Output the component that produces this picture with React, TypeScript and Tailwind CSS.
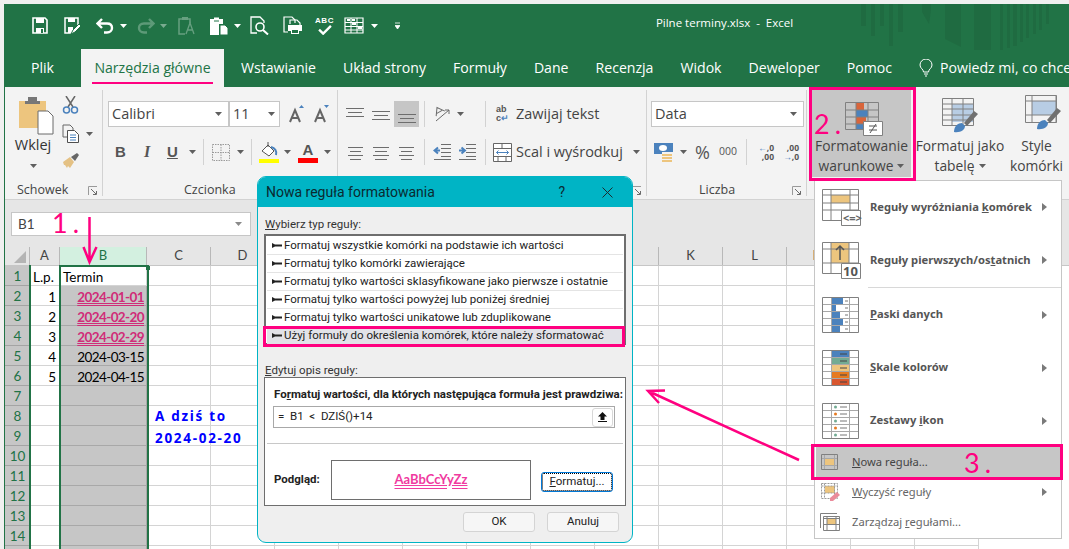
import type { ReactNode } from "react"

const PINK = "#ff0080"
const GREEN = "#217346"

function Caret({ color = "#5f5f5f" }: { color?: string }) {
  return (
    <svg width="7" height="4" viewBox="0 0 7 4" className="shrink-0">
      <path d="M0 0h7L3.500 4z" fill={color} />
    </svg>
  )
}

function Launcher() {
  return (
    <svg width="10" height="10" viewBox="0 0 10 10" className="shrink-0">
      <path d="M.5 9V.5H9" fill="none" stroke="#9a9a9a" />
      <path d="M3 3l5 5M5 8.500h3.500V5" fill="none" stroke="#6a6a6a" />
    </svg>
  )
}

function Sep({ h = 26 }: { h?: number }) {
  return <div className="w-px bg-[#d2d2d2] shrink-0" style={{ height: h }} />
}

function Lines({ w = 18, rows, sizes }: { w?: number; rows: number[]; sizes?: number[] }) {
  return (
    <svg width={w} height="20" viewBox={`0 0 ${w} 20`} className="shrink-0">
      {rows.map((y, i) => {
        const s = sizes ? sizes[i] : 0
        return <path key={y} d={`M${s} ${y}.5H${w - s}`} stroke="#6d6d6d" />
      })}
    </svg>
  )
}

function QuickBar() {
  return (
    <div className="flex items-center pl-[27px] h-[45px] shrink-0 pb-[2px]">
      <svg width="16" height="17" viewBox="0 0 16 17">
        <path d="M1 1h12l2 2v13H1z" fill="none" stroke="#fff" strokeWidth="1.600" />
        <path d="M4 1h8v5H4z" fill="#fff" />
        <path d="M4 16v-5h8v5z" fill="#fff" />
        <path d="M9 12h2v4H9z" fill={GREEN} />
      </svg>
      <svg width="17" height="18" viewBox="0 0 17 18" className="ml-[16px]">
        <path d="M7 16H1V1h13v7" fill="none" stroke="#fff" strokeWidth="1.500" />
        <path d="M4 1h7v4H4zM4 10h5v6H4z" fill="#fff" />
        <path d="M7 17l2-4 6-6 2 2-6 6z" fill="#fff" stroke={GREEN} />
      </svg>
      <svg width="18" height="16" viewBox="0 0 18 16" className="ml-[15px]">
        <path d="M6 1L1.500 5.500 6 10M2 5.500h9c3.500 0 5 2 5 4.500s-2 4.500-5 4.500H8" fill="none" stroke="#fff" strokeWidth="2.400" />
      </svg>
      <div className="ml-[6px]"><Caret color="#ffffff" /></div>
      <svg width="18" height="16" viewBox="0 0 18 16" className="ml-[10px] opacity-40">
        <path d="M12 1l4.500 4.500L12 10M16 5.500H7c-3.500 0-5 2-5 4.500s2 4.500 5 4.500h3" fill="none" stroke="#b8d5c4" strokeWidth="2.400" />
      </svg>
      <div className="ml-[5px] opacity-40"><Caret color="#ffffff" /></div>
      <svg width="18" height="19" viewBox="0 0 18 19" className="ml-[11px] opacity-40">
        <path d="M5 3H1v15h6M12 7V3H8" fill="none" stroke="#cfe3d7" strokeWidth="1.500" />
        <path d="M4 1h6v3H4z" fill="#cfe3d7" />
        <path d="M8 18l4-11 4 11M10 14h4" fill="none" stroke="#cfe3d7" strokeWidth="1.300" />
      </svg>
      <svg width="20" height="20" viewBox="0 0 20 20" className="ml-[13px]">
        <path d="M1 3h4V1.500h5V3h4v5H10v11H1z" fill="#fff" />
        <path d="M11 9h5l3 3v7h-8z" fill="#fff" stroke={GREEN} />
        <path d="M5 5h5" stroke={GREEN} />
      </svg>
      <div className="ml-[5px]"><Caret color="#ffffff" /></div>
      <svg width="19" height="19" viewBox="0 0 19 19" className="ml-[9px]">
        <path d="M7 17H1V1h9l4 4v2" fill="none" stroke="#fff" strokeWidth="1.300" />
        <circle cx="10" cy="11" r="4" fill="none" stroke="#fff" strokeWidth="1.600" />
        <path d="M13 14l5 4.500" stroke="#fff" strokeWidth="2" />
      </svg>
      <svg width="20" height="19" viewBox="0 0 20 19" className="ml-[14px]">
        <path d="M5 16H1V1h8l3 3v3" fill="none" stroke="#fff" strokeWidth="1.200" />
        <path d="M7 8V4h7l3 3v2" fill="none" stroke="#fff" strokeWidth="1.200" />
        <path d="M5 9h14v6h-3v3H8v-3H5z" fill="#fff" />
        <path d="M9 14h6v3H9z" fill={GREEN} />
      </svg>
      <div className="ml-[13px] flex flex-col items-center w-[17px] h-[19px]">
        <span className="text-[8px] leading-[9px] font-bold text-white tracking-[0.500px] font-['Liberation_Sans',sans-serif]">ABC</span>
        <svg width="16" height="11" viewBox="0 0 16 11">
          <path d="M1.500 5l4.500 4.500L14.500 1" fill="none" stroke="#fff" strokeWidth="2.600" />
        </svg>
      </div>
      <svg width="20" height="17" viewBox="0 0 20 17" className="ml-[11px]">
        <path d="M1 1h18v15H1z" fill="none" stroke="#fff" strokeWidth="1.200" />
        <path d="M1 5.500h18M1 9.500h18M1 13h18M7 1v15M13 1v15" stroke="#fff" />
        <path d="M3 3h3M8 7h4M14 11h4M8 3h3" stroke="#fff" strokeWidth="2" />
      </svg>
      <div className="ml-[7px]"><Caret color="#ffffff" /></div>
      <svg width="5" height="8" viewBox="0 0 5 8" className="ml-[17px]">
        <path d="M0 1h5M0 3.500h5L2.500 7z" stroke="#fff" fill="#fff" strokeWidth=".8" />
      </svg>
    </div>
  )
}

function Tabs() {
  const tabs = ["Wstawianie", "Układ strony", "Formuły", "Dane", "Recenzja", "Widok", "Deweloper", "Pomoc"]
  return (
    <div className="flex h-[38px] pl-[26px] text-[14.100px] text-white items-stretch shrink-0 whitespace-nowrap font-['Open_Sans',sans-serif]">
      <div className="flex items-center w-[50px] shrink-0">Plik</div>
      <div className="relative flex items-center w-[143px] justify-center bg-[#f3f3f3] text-[#217346] shrink-0">
        Narzędzia główne
        <div className="absolute left-[11px] w-[121px] top-[33px] h-[2px] bg-[#ff0080]" />
      </div>
      {tabs.map((t, i) => (
        <div key={t} className={`flex items-center shrink-0 ${i === 0 ? "ml-[17px]" : "ml-[27px]"}`}>{t}</div>
      ))}
      <div className="flex items-center ml-[27px] gap-[7px] shrink-0">
        <svg width="14" height="18" viewBox="0 0 14 18">
          <path d="M4.500 13C4.500 10 1 9.500 1 6a6 6 0 0 1 12 0c0 3.500-3.500 4-3.500 7zM5 15h4M6 17h2" fill="none" stroke="#fff" />
        </svg>
        Powiedz mi, co chcesz zrobić
      </div>
    </div>
  )
}

function Group({ w, label, children, labelClass = "justify-center" }: { w: number; label: string; children: ReactNode; labelClass?: string }) {
  return (
    <div className="relative h-full border-r border-[#d2d2d2] shrink-0" style={{ width: w }}>
      {children}
      <div className={`absolute bottom-[-3px] left-0 right-0 flex h-[18px] items-center ${labelClass} text-[12.500px] text-[#444]`}>{label}</div>
      <div className="absolute right-[4px] bottom-0"><Launcher /></div>
    </div>
  )
}

function Clipboard() {
  return (
    <Group w={98} label="Schowek" labelClass="justify-start pl-[12px]">
      <div className="flex pl-[9px] pt-[5px]">
        <div className="w-[44px] flex flex-col items-center">
          <svg width="36" height="40" viewBox="0 0 36 40">
            <path d="M1 6h27v27H1z" fill="#edc57e" />
            <path d="M10 6V2h9v4h3v3H7V6z" fill="#777" />
            <path d="M20 16h10l5 5v18H20z" fill="#fff" stroke="#6a6a6a" />
          </svg>
          <span className="text-[14.500px] mt-[1px] ml-[-6px] leading-[18px] text-[#333]">Wklej</span>
          <div className="mt-[10px] ml-[-6px]"><Caret /></div>
        </div>
        <div className="ml-[4px] flex flex-col pt-[1px]">
          <svg width="18" height="18" viewBox="0 0 18 18">
            <path d="M4 0l7 11M13 0L6 11" stroke="#666" strokeWidth="1.500" />
            <circle cx="4.500" cy="14" r="3" fill="none" stroke="#4b82bd" strokeWidth="1.500" />
            <circle cx="12.500" cy="14" r="3" fill="none" stroke="#4b82bd" strokeWidth="1.500" />
          </svg>
          <div className="flex items-center mt-[10px]">
            <svg width="18" height="19" viewBox="0 0 18 19">
              <path d="M5 13H1V1h7l3 3v2" fill="none" stroke="#666" />
              <path d="M5.500 6.500h7l4 4v8h-11z" fill="#fff" stroke="#4f4f4f" />
              <path d="M8 11h6M8 13.500h6M8 16h6" stroke="#4b82bd" />
            </svg>
            <div className="ml-[6px]"><Caret /></div>
          </div>
          <svg width="18" height="16" viewBox="0 0 18 16" className="mt-[10px]">
            <path d="M1 9l7-5 4 5-4 6-2-2-1 2-2-3-1 0z" fill="#e4c184" />
            <path d="M9 4l6-4 2 2-4 6z" fill="#666" />
          </svg>
        </div>
      </div>
    </Group>
  )
}

function Font() {
  return (
    <Group w={235} label="Czcionka" labelClass="justify-start pl-[81px]">
      <div className="flex items-center pl-[5px] pt-[11px] h-[37px]">
        <div className="w-[121px] h-[26px] bg-white border border-[#c6c6c6] flex items-center justify-between pl-[3px] pr-[6px] text-[14.500px] text-[#444]">
          Calibri <Caret />
        </div>
        <div className="w-[51px] h-[26px] bg-white border border-[#c6c6c6] flex items-center justify-between pl-[3px] pr-[4px] text-[14.500px] text-[#444]">
          11 <Caret />
        </div>
        <svg width="16" height="18" viewBox="0 0 16 18" className="ml-[9px]">
          <path d="M1 17L6 5l5 12M3 13h6" fill="none" stroke="#666" strokeWidth="2" />
          <path d="M10 3h5L12.500 0z" fill="#4b82bd" />
        </svg>
        <svg width="16" height="18" viewBox="0 0 16 18" className="ml-[9px]">
          <path d="M1 17L6 5l5 12M3 13h6" fill="none" stroke="#666" strokeWidth="2" />
          <path d="M10 0h5l-2.500 3z" fill="#4b82bd" />
        </svg>
      </div>
      <div className="flex items-center pl-[12px] mt-[11px] h-[28px] text-[#555]">
        <span className="font-['Liberation_Sans',sans-serif] font-bold text-[15px] w-[29px]">B</span>
        <span className="font-['Liberation_Serif',serif] font-bold italic text-[16px] w-[23px]">I</span>
        <span className="font-['Liberation_Sans',sans-serif] font-bold text-[15px] underline w-[22px]">U</span>
        <Caret />
        <div className="ml-[7px]"><Sep /></div>
        <svg width="18" height="17" viewBox="0 0 18 17" className="ml-[8px]">
          <path d="M.5.500h17v16H.500zM9 .5v16M.5 8.500h17" fill="none" stroke="#9a9a9a" strokeDasharray="1.500 1" />
        </svg>
        <div className="ml-[7px]"><Caret /></div>
        <div className="ml-[7px]"><Sep /></div>
        <svg width="21" height="21" viewBox="0 0 21 21" className="ml-[6px]">
          <path d="M4 9l6-6 6 6-5 5z" fill="#fff" stroke="#555" />
          <path d="M10 0v5" stroke="#555" />
          <path d="M13 5c4 1 6 4 5 8" fill="none" stroke="#4b82bd" strokeWidth="2" />
          <path d="M1 17h20v4H1z" fill="#ffff00" />
        </svg>
        <div className="ml-[5px]"><Caret /></div>
        <div className="relative ml-[7px] w-[20px] h-[21px] flex justify-center">
          <span className="font-['Liberation_Sans',sans-serif] font-bold text-[15px] leading-[16px] text-[#555]">A</span>
          <div className="absolute left-0 bottom-0 w-[20px] h-[5px] bg-[#ff0000]" />
        </div>
        <div className="ml-[6px]"><Caret /></div>
      </div>
    </Group>
  )
}

function Alignment() {
  return (
    <Group w={309} label="">
      <div className="flex items-center pl-[4px] pt-[11px] h-[37px]">
        <div className="w-[26px] flex justify-center"><Lines w={18} rows={[4, 8, 12]} sizes={[0, 2, 0]} /></div>
        <div className="w-[26px] flex justify-center"><Lines w={18} rows={[7, 11, 15]} sizes={[0, 2, 0]} /></div>
        <div className="w-[25px] h-[26px] bg-[#c6c6c6] flex items-center justify-center"><Lines w={18} rows={[10, 14, 18]} sizes={[0, 2, 0]} /></div>
        <div className="ml-[5px]"><Sep /></div>
        <svg width="18" height="18" viewBox="0 0 18 18" className="ml-[8px]">
          <path d="M1 9l5-7 5 7M3 7h6" fill="none" stroke="#6a6a6a" transform="rotate(-30 6 6)" />
          <path d="M3 16L16 5M12 5h4v4" fill="none" stroke="#6a6a6a" />
        </svg>
        <div className="ml-[6px]"><Caret /></div>
        <div className="ml-[21px]"><Sep /></div>
        <div className="ml-[10px] w-[17px] h-[18px] font-['Liberation_Sans',sans-serif] text-[9px] leading-[9px] font-bold text-[#555] shrink-0">
          <span>ab</span>
          <br />
          <span>c</span>
          <span className="text-[#4b82bd]">↵</span>
        </div>
        <span className="ml-[3px] text-[14.500px] text-[#444] whitespace-nowrap">Zawijaj tekst</span>
      </div>
      <div className="flex items-center pl-[10px] mt-[11px] h-[28px]">
        <Lines w={15} rows={[5, 9, 13, 17]} sizes={[0, 2, 0, 2]} />
        <div className="ml-[10px]"><Lines w={16} rows={[5, 9, 13, 17]} sizes={[0, 2, 0, 2]} /></div>
        <div className="ml-[10px]"><Lines w={15} rows={[5, 9, 13, 17]} sizes={[0, 2, 0, 2]} /></div>
        <div className="ml-[10px]"><Sep /></div>
        <svg width="18" height="18" viewBox="0 0 18 18" className="ml-[8px]">
          <path d="M8 1.500h10M8 5.500h10M8 9.500h10M8 13.500h10M1 16.500h17" stroke="#6d6d6d" />
          <path d="M7 7.500H2M5 4.500L1.500 7.500 5 10.500" fill="none" stroke="#4b82bd" strokeWidth="2" />
        </svg>
        <svg width="18" height="18" viewBox="0 0 18 18" className="ml-[7px]">
          <path d="M8 1.500h10M8 5.500h10M8 9.500h10M8 13.500h10M1 16.500h17" stroke="#6d6d6d" />
          <path d="M1 7.500h5M3.500 4.500L7 7.500 3.500 10.500" fill="none" stroke="#4b82bd" strokeWidth="2" />
        </svg>
        <div className="ml-[9px]"><Sep /></div>
        <svg width="19" height="19" viewBox="0 0 19 19" className="ml-[7px]">
          <path d="M.5.500h18v18H.500z" fill="#fff" stroke="#666" />
          <path d="M.5 5.500h18M.5 13.500h18M9 .5v5M5 13.500v5M13 13.500v5" stroke="#666" />
          <path d="M3.500 9.500h12M5.500 7.500l-2 2 2 2M13.500 7.500l2 2-2 2" fill="none" stroke="#4b82bd" />
        </svg>
        <span className="ml-[4px] text-[14.500px] text-[#444] whitespace-nowrap">Scal i wyśrodkuj</span>
        <div className="ml-[10px]"><Caret /></div>
      </div>
    </Group>
  )
}

function NumberGroup() {
  return (
    <Group w={160} label="Liczba" labelClass="justify-start pl-[52px]">
      <div className="flex items-center pl-[4px] pt-[11px] h-[37px]">
        <div className="w-[153px] h-[26px] bg-white border border-[#c6c6c6] flex items-center justify-between pl-[3px] pr-[6px] text-[14.500px] text-[#444]">
          Data <Caret />
        </div>
      </div>
      <div className="flex items-center pl-[7px] mt-[11px] h-[28px] text-[#555]">
        <svg width="20" height="19" viewBox="0 0 20 19" className="shrink-0">
          <path d="M0 0h19v9H8v2H0z" fill="#4b82bd" />
          <ellipse cx="9" cy="5" rx="4" ry="3" fill="#fff" />
          <path d="M8 11h10v2H8zM8 14h10v2H8zM8 17h10v2H8z" fill="#edc57e" />
        </svg>
        <div className="ml-[6px]"><Caret /></div>
        <span className="ml-[8px] text-[18px] w-[16px] leading-[18px]">%</span>
        <span className="ml-[8px] text-[10.500px] w-[18px]">000</span>
        <div className="ml-[9px]"><Sep /></div>
        <div className="ml-[9px] w-[18px] text-[8.500px] leading-[9px] font-bold text-right">
          <span className="text-[#4b82bd]">←</span>,0
          <br />,00
        </div>
        <div className="ml-[7px] w-[18px] text-[8.500px] leading-[9px] font-bold text-right">
          ,00
          <br />
          <span className="text-[#4b82bd]">→</span>,0
        </div>
      </div>
    </Group>
  )
}

function MiniGrid({ w, h, cols, rows, children }: { w: number; h: number; cols: number[]; rows: number[]; children?: ReactNode }) {
  return (
    <svg width={w + 1} height={h + 1} viewBox={`0 0 ${w + 1} ${h + 1}`} className="shrink-0">
      {children}
      {cols.map(c => <path key={`c${c}`} d={`M${c}.5 0V${h}`} stroke="#a8a8a8" />)}
      {rows.map(r => <path key={`r${r}`} d={`M0 ${r}.5H${w}`} stroke="#a8a8a8" />)}
      <path d={`M.5.500H${w}.5V${h}.5H.500z`} fill="none" stroke="#808080" />
    </svg>
  )
}

function Styles() {
  return (
    <div className="flex h-full flex-1 text-[13.800px] leading-[20px] text-[#444] whitespace-nowrap">
      <div className="w-[99px] ml-[5px] h-[87px] bg-[#c6c6c6] flex flex-col items-center shrink-0">
        <svg width="38" height="34" viewBox="0 0 38 34" className="mt-[12px] ml-[5px] shrink-0">
          <path d="M11 1h8v7h-8z" fill="#d9653b" />
          <path d="M11 8h12v7H11z" fill="#4b82bd" />
          <path d="M11 15h10v7H11z" fill="#d9653b" />
          <path d="M11 22h8v6H11z" fill="#4b82bd" />
          <path d="M.5.500h33v27H.500zM11 .5v27M23 .5v27M.5 8h33M.5 15h33M.5 22h33" fill="none" stroke="#808080" />
          <path d="M18.500 19.500h19v14h-19z" fill="#fff" stroke="#808080" />
          <path d="M24 24h8M24 28h8M31 22l-6 9" stroke="#555" />
        </svg>
        <span>Formatowanie</span>
        <span className="flex items-center gap-[4px]">warunkowe <Caret /></span>
      </div>
      <div className="w-[90px] ml-[4px] flex flex-col items-center shrink-0">
        <svg width="36" height="36" viewBox="0 0 36 36" className="mt-[8px] mb-[2px] shrink-0">
          <path d="M10 6h22v18H10z" fill="#b8cde4" />
          <path d="M.5.500h31v27H.500zM.5 6h31M.5 11h31M.5 17h31M.5 22h31M10 .5v27M21 .5v27" fill="none" stroke="#808080" />
          <path d="M12 34c0-6 4-9 8-9l3 3c0 4-5 7-11 6z" fill="#4b82bd" />
          <path d="M22 25l10-12 4 3-11 12z" fill="#707070" />
        </svg>
        <span>Formatuj jako</span>
        <span className="flex items-center gap-[4px]">tabelę <Caret /></span>
      </div>
      <div className="w-[53px] ml-[5px] flex flex-col items-center shrink-0">
        <svg width="40" height="36" viewBox="0 0 40 36" className="mt-[5px] mb-[5px] ml-[16px] shrink-0">
          <path d="M7 6h24v14H7z" fill="#b8cde4" />
          <path d="M.5.500h31v27H.500zM.5 6h31M.5 20h31M7 .5v27M31 .5v27" fill="none" stroke="#808080" />
          <path d="M12 34c0-6 4-9 8-9l3 3c0 4-5 7-11 6z" fill="#4b82bd" />
          <path d="M22 25l10-12 4 3-11 12z" fill="#707070" />
        </svg>
        <span>Style</span>
        <span>komórki</span>
      </div>
    </div>
  )
}

function Ribbon() {
  return (
    <div className="flex h-[113px] bg-[#f3f3f3] border-b border-[#d2d2d2] shrink-0 pb-[3px] pt-[3px] font-['Open_Sans',sans-serif]">
      <Clipboard />
      <Font />
      <Alignment />
      <NumberGroup />
      <Styles />
    </div>
  )
}

const COLS = ["A", "B", "C", "D", "E", "F", "G", "H", "I", "J", "K", "L", "M", "N", "O"]
const COL_W = [30, 87, 64, 64, 64, 64, 64, 64, 64, 64, 64, 64, 64, 64, 64]
const ROWS = [1, 2, 3, 4, 5, 6, 7, 8, 9, 10, 11, 12, 13, 14, 15]
const DATES: Record<number, { lp: string; d: string; hit?: boolean }> = {
  2: { lp: "1", d: "2024-01-01", hit: true },
  3: { lp: "2", d: "2024-02-20", hit: true },
  4: { lp: "3", d: "2024-02-29", hit: true },
  5: { lp: "4", d: "2024-03-15" },
  6: { lp: "5", d: "2024-04-15" },
}

function Sheet() {
  return (
    <div className="flex-1 bg-white overflow-hidden font-['Lato',sans-serif] text-[13.500px] text-black relative">
      <div className="flex h-[19px] bg-[#e6e6e6] border-b border-[#c6c6c6]">
        <div className="w-[25px] shrink-0 border-r border-[#b8b8b8] relative">
          <div className="absolute right-[3px] bottom-[2px] w-0 h-0 border-l-[12px] border-l-transparent border-b-[12px] border-b-[#b4b4b4]" />
        </div>
        {COLS.map((c, i) => (
          <div
            key={c}
            className={`shrink-0 flex items-center justify-center border-r border-[#b8b8b8] text-[13px] ${c === "B" ? "bg-[#d3f0e0] text-[#217346]" : "text-[#444]"}`}
            style={{ width: COL_W[i] }}
          >
            {c}
          </div>
        ))}
      </div>
      {ROWS.map(r => {
        const row = DATES[r]
        return (
          <div key={r} className="flex h-[20px]">
            <div className="w-[25px] shrink-0 bg-[#c6c6c6] border-b border-[#a4a4a4] flex items-center justify-center pt-[2px] text-[13.500px] text-[#217346]">{r < 15 ? r : ""}</div>
            {COLS.map((c, i) => {
              const colB = c === "B" && r > 1
              let content: ReactNode = null
              if (c === "A" && r === 1) content = <span className="pl-[3px]">L.p.</span>
              if (c === "B" && r === 1) content = <span className="pl-[3px]">Termin</span>
              if (c === "A" && row) content = <span className="block text-right pr-[3px]">{row.lp}</span>
              if (c === "B" && row) {
                content = (
                  <span className={`block text-right pr-[2px] tracking-[-0.600px] ${row.hit ? "font-bold text-[#d02c78] underline decoration-double" : ""}`}>{row.d}</span>
                )
              }
              return (
                <div
                  key={c}
                  className={`shrink-0 leading-[23px] whitespace-nowrap border-r border-b ${colB ? "bg-[#c6c6c6] border-[#a8a8a8]" : "border-[#d4d4d4]"}`}
                  style={{ width: COL_W[i] }}
                >
                  {content}
                </div>
              )
            })}
          </div>
        )
      })}
      <div className="absolute left-[24px] top-[18px] bottom-0 w-[2px] bg-[#217346]" />
      <div className="absolute left-[54px] top-[18px] bottom-0 w-[90px] border-x-2 border-t-2 border-[#217346]" />
      <div className="absolute left-[141px] top-[19px] w-[4px] h-[4px] bg-[#217346]" />
      <div className="absolute left-[150px] top-[159px] text-[#0000ff] font-['Open_Sans',sans-serif] font-bold text-[13.500px] leading-[20px] tracking-[1.700px] whitespace-nowrap">
        <div className="h-[20px]">A dziś to</div>
        <div className="h-[20px] mt-[2px]">2024-02-20</div>
      </div>
    </div>
  )
}

function FormulaBar() {
  return (
    <div className="h-[47px] bg-[#e6e6e6] shrink-0 pt-[12px] pl-[6px] font-['Lato',sans-serif]">
      <div className="w-[240px] h-[24px] bg-white border border-[#c6c6c6] flex items-center justify-between pl-[6px] pr-[8px] text-[13.500px] text-[#444]">
        B1 <Caret color="#8a8a8a" />
      </div>
    </div>
  )
}

function DialogRow({ text, active }: { text: string; active?: boolean }) {
  return (
    <div className={`flex items-center h-[18px] pl-[5px] gap-[2px] border-b border-[#e4e4e4] whitespace-nowrap ${active ? "bg-[#e2e2e8]" : ""}`}>
      <svg width="10" height="5" viewBox="0 0 10 5" className="shrink-0">
        <path d="M0 0l3 1.500h7v2H3L0 5z" fill="#222" />
      </svg>
      {text}
    </div>
  )
}

function Dialog() {
  return (
    <div className="absolute left-[257px] top-[176px] w-[376px] h-[367px] bg-[#efefef] border border-[#00b4c5] rounded-[9px] overflow-hidden font-['Roboto',sans-serif] text-[11.500px] text-[#222] flex flex-col">
      <div className="h-[30px] bg-[#00b4c5] flex items-center justify-between pl-[8px] pr-[19px] text-[14px] text-[#0b2a30] shrink-0">
        <span>Nowa reguła formatowania</span>
        <div className="flex items-center gap-[37px]">
          <span>?</span>
          <svg width="11" height="11" viewBox="0 0 11 11">
            <path d="M.5.500l10 10M10.500.5l-10 10" stroke="#1d2b2e" />
          </svg>
        </div>
      </div>
      <div className="pl-[7px] pt-[9px] leading-[16px] text-[#333]">
        <span className="underline">W</span>ybierz typ reguły:
      </div>
      <div className="mx-[6px] mt-[2px] w-[362px] h-[111px] bg-white border-2 border-[#6e6e6e] pt-[1px] px-[1px] shrink-0">
        <DialogRow text="Formatuj wszystkie komórki na podstawie ich wartości" />
        <DialogRow text="Formatuj tylko komórki zawierające" />
        <DialogRow text="Formatuj tylko wartości sklasyfikowane jako pierwsze i ostatnie" />
        <DialogRow text="Formatuj tylko wartości powyżej lub poniżej średniej" />
        <DialogRow text="Formatuj tylko wartości unikatowe lub zduplikowane" />
        <DialogRow text="Użyj formuły do określenia komórek, które należy sformatować" active />
      </div>
      <div className="pl-[7px] mt-[17px] leading-[16px] text-[#333]">
        <span className="underline">E</span>dytuj opis reguły:
      </div>
      <div className="mx-[6px] mt-[-1px] w-[362px] h-[129px] bg-white border border-[#6e6e6e] shrink-0 flex flex-col">
        <div className="pl-[9px] pt-[8px] font-bold leading-[16px] whitespace-nowrap">
          Fo<span className="underline">r</span>matuj wartości, dla których następująca formuła jest prawdziwa:
        </div>
        <div className="ml-[8px] mt-[4px] w-[342px] h-[22px] border border-[#a8a8a8] bg-white flex items-center justify-between pl-[4px] pr-[1px] shrink-0">
          <span className="whitespace-pre">=  B1  &lt;  DZIŚ()+14</span>
          <div className="w-[21px] h-[19px] bg-white border border-[#d8d8d8] rounded-[3px] flex items-center justify-center">
            <svg width="9" height="10" viewBox="0 0 9 10">
              <path d="M4.500 0L9 4.500H6.500V8h-4V4.500H0zM0 9h9v1H0z" fill="#111" />
            </svg>
          </div>
        </div>
        <div className="h-px bg-[#c8c8c8] mx-[2px] mt-[15px] shrink-0" />
        <div className="flex items-center pl-[9px] mt-[16px]">
          <span className="font-bold w-[57px]">Podgląd:</span>
          <div className="w-[200px] h-[40px] border border-[#6e6e6e] flex items-center justify-center text-[13px] font-bold text-[#f03aa0] underline decoration-double font-['Lato',sans-serif]">AaBbCcYyZz</div>
          <div className="ml-[10px] w-[72px] h-[20px] rounded-[3px] border border-[#0078d7] flex items-center justify-center mt-[3px] outline-1 outline-dotted outline-offset-[-2px] outline-black">
            <span><span className="underline">F</span>ormatuj...</span>
          </div>
        </div>
      </div>
      <div className="flex justify-end gap-[12px] pr-[13px] mt-[6px]">
        <div className="w-[72px] h-[20px] border border-[#d4d4d4] rounded-[3px] bg-[#f6f6f6] flex items-center justify-center">OK</div>
        <div className="w-[72px] h-[20px] border border-[#d4d4d4] rounded-[3px] bg-[#f6f6f6] flex items-center justify-center">Anuluj</div>
      </div>
    </div>
  )
}

function SubArrow() {
  return (
    <svg width="5" height="8" viewBox="0 0 5 8" className="shrink-0">
      <path d="M0 0l5 4-5 4z" fill="#7a7a7a" />
    </svg>
  )
}

function BigItem({ icon, label, h = 53 }: { icon: ReactNode; label: ReactNode; h?: number }) {
  return (
    <div className="flex items-center pl-[7px] pr-[14px] text-[11.200px] font-bold text-[#555]" style={{ height: h }}>
      <div className="w-[48px] h-[40px] flex items-center shrink-0">{icon}</div>
      <span className="flex-1 whitespace-nowrap">{label}</span>
      <SubArrow />
    </div>
  )
}

function Menu() {
  return (
    <div className="absolute left-[814px] top-[180px] w-[248px] h-[359px] bg-white border border-[#c6c6c6] font-['Noto_Sans',sans-serif]">
      <BigItem
        h={52}
        label={<>Reguły wyróżniania <span className="underline">k</span>omórek</>}
        icon={
          <svg width="40" height="37" viewBox="0 0 40 37">
            <path d="M9 6h19v8H9z" fill="#edc57e" />
            <path d="M.5.500h36v31H.500zM.5 6h36M.5 14h36M.5 21h36M9 .5v31M28 .5v31" fill="none" stroke="#808080" />
            <path d="M19.500 21.500h19v15h-19z" fill="#fff" stroke="#808080" />
            <text x="21" y="33" fontSize="11" fill="#666" fontFamily="Noto Sans">&lt;=&gt;</text>
          </svg>
        }
      />
      <BigItem
        h={54}
        label={<>Reguły pierwszych/os<span className="underline">t</span>atnich</>}
        icon={
          <svg width="40" height="37" viewBox="0 0 40 37">
            <path d="M9 1h18v20H9z" fill="#edc57e" />
            <path d="M.5.500h36v31H.500zM.5 7h36M.5 21h36M9 .5v31M27 .5v31" fill="none" stroke="#808080" />
            <path d="M18 18V4M14 8l4-4 4 4" fill="none" stroke="#555" strokeWidth="1.500" />
            <path d="M19.500 21.500h19v15h-19z" fill="#fff" stroke="#808080" />
            <text x="21" y="34" fontSize="13" fill="#555" fontFamily="Noto Sans">10</text>
          </svg>
        }
      />
      <div className="h-px bg-[#d8d8d8] ml-[53px]" />
      <BigItem
        label={<><span className="underline">P</span>aski danych</>}
        icon={
          <MiniGrid w={36} h={35} cols={[9, 27]} rows={[7, 14, 21, 28]}>
            <path d="M9 1h12v6H9zM9 8h5v6H9zM9 15h9v6H9zM9 22h12v6H9zM9 29h9v6H9z" fill="#4b82bd" />
            <path d="M23 4h3M23 11h3M23 18h3M23 25h3M23 32h3" stroke="#777" />
          </MiniGrid>
        }
      />
      <BigItem
        label={<><span className="underline">S</span>kale kolorów</>}
        icon={
          <MiniGrid w={36} h={35} cols={[9, 27]} rows={[7, 14, 21, 28]}>
            <path d="M9 1h18v6H9z" fill="#4b82bd" />
            <path d="M9 7h18v7H9z" fill="#72ab93" />
            <path d="M9 14h18v7H9z" fill="#edc57e" />
            <path d="M9 21h18v7H9z" fill="#e67a20" />
            <path d="M9 28h18v7H9z" fill="#d9572f" />
            <path d="M18 4h7M18 11h7M18 18h7M18 25h7M18 32h7" stroke="#444" />
          </MiniGrid>
        }
      />
      <BigItem
        label={<>Zestawy <span className="underline">i</span>kon</>}
        icon={
          <MiniGrid w={36} h={35} cols={[9, 27]} rows={[7, 14, 21, 28]}>
            <circle cx="13.500" cy="4" r="1.500" fill="#72ab93" />
            <circle cx="13.500" cy="11" r="1.500" fill="#e67a20" />
            <circle cx="13.500" cy="18" r="1.500" fill="#72ab93" />
            <circle cx="13.500" cy="25" r="1.500" fill="#e67a20" />
            <circle cx="13.500" cy="32" r="1.500" fill="#72ab93" />
            <path d="M18 4h7M18 11h7M18 18h7M18 25h7M18 32h7" stroke="#777" />
          </MiniGrid>
        }
      />
      <div className="h-[30px] mx-[1px] bg-[#c6c6c6] flex items-center pl-[5px] text-[11.200px] text-[#444]">
        <MiniGrid w={16} h={15} cols={[3, 13]} rows={[4, 11]}>
          <path d="M3 4h10v7H3z" fill="#edc57e" />
        </MiniGrid>
        <span className="ml-[14px]"><span className="underline">N</span>owa reguła...</span>
      </div>
      <div className="h-[30px] flex items-center pl-[6px] pr-[14px] text-[11.200px] text-[#666]">
        <svg width="19" height="19" viewBox="0 0 19 19" className="shrink-0">
          <path d="M4 3h10v7H4z" fill="#edc57e" />
          <path d="M.5.500h16v15H.500zM.5 3h16M.5 10h16M3.500 .5v15M13.500 .5v15" fill="none" stroke="#9a9a9a" strokeDasharray="2 1" />
          <path d="M9 15l7-6 3 3-7 6-3 0z" fill="#ea8a9a" />
        </svg>
        <span className="ml-[12px] flex-1"><span className="underline">W</span>yczyść reguły</span>
        <SubArrow />
      </div>
      <div className="h-[30px] flex items-center pl-[5px] text-[11.200px] text-[#666]">
        <svg width="20" height="18" viewBox="0 0 20 18" className="shrink-0">
          <path d="M.5 15V.5H17" fill="none" stroke="#808080" />
          <path d="M7 5h9v6H7z" fill="#edc57e" />
          <path d="M3.500 3.500h16v14h-16zM3.500 5.500h16M3.500 11.500h16M7 3.500v14M16 3.500v14" fill="none" stroke="#808080" />
        </svg>
        <span className="ml-[12px]">Zarządzaj <span className="underline">r</span>egułami...</span>
      </div>
    </div>
  )
}

function Annotations() {
  const num = "absolute text-[#ff0080] text-[27px] leading-[28px] tracking-[5px] font-['Lato',sans-serif] font-normal"
  return (
    <>
      <svg width="1069" height="549" viewBox="0 0 1069 549" className="absolute left-0 top-0 pointer-events-none">
        <path d="M89.500 217V260M83.500 247l6 15 7-15" fill="none" stroke={PINK} strokeWidth="2.500" />
        <path d="M799 460L648 391M665 390.500l-17 .5 11 12" fill="none" stroke={PINK} strokeWidth="2.500" />
      </svg>
      <div className="absolute left-[809px] top-[87px] w-[107px] h-[94px] border-[3px] border-[#ff0080]" />
      <div className="absolute left-[263px] top-[326px] w-[362px] h-[21px] border-[3px] border-[#ff0080]" />
      <div className="absolute left-[811px] top-[444px] w-[252px] h-[36px] border-[3px] border-[#ff0080]" />
      <span className={`${num} left-[52px] top-[209px]`}>1.</span>
      <span className={`${num} left-[814px] top-[110px]`}>2.</span>
      <span className={`${num} left-[964px] top-[449px]`}>3.</span>
    </>
  )
}

export default function App() {
  return (
    <div className="relative w-[1069px] h-[549px] overflow-hidden bg-[#f0f0f0] pt-[4px] pl-[4px]">
      <div className="w-full h-full flex flex-col border-l border-[#217346] overflow-hidden">
        <div className="relative bg-[#217346] shrink-0">
          <div className="absolute left-0 top-[10px] text-center text-[11.500px] pl-[371px] w-[1068px] text-white font-['Open_Sans',sans-serif] whitespace-pre">
            Pilne terminy.xlsx  -  Excel
          </div>
          <svg width="213" height="46" viewBox="0 0 213 46" className="absolute left-[851px] top-0">
            <path d="M5 0h5v22H5zM15 0h4v32h-4zM24 0h4v22h-4zM33 0h4v42h-4zM42 0h5v28h-5zM66 0h9v6l-2 14-7-12zM89 0h16v43L89 35zM118 0h17v46h-17zM144 0h3v46h-3zM151 0h3v44h-3zM157 0h4v42h-4zM164 0h3v38h-3zM170 0h3v34h-3zM177 0h3v30h-3zM183 0h3v26h-3zM190 0h3v20h-3z" fill="#1f6b41" />
          </svg>
          <QuickBar />
          <Tabs />
        </div>
        <Ribbon />
        <FormulaBar />
        <Sheet />
      </div>
      <Dialog />
      <Menu />
      <Annotations />
    </div>
  )
}
